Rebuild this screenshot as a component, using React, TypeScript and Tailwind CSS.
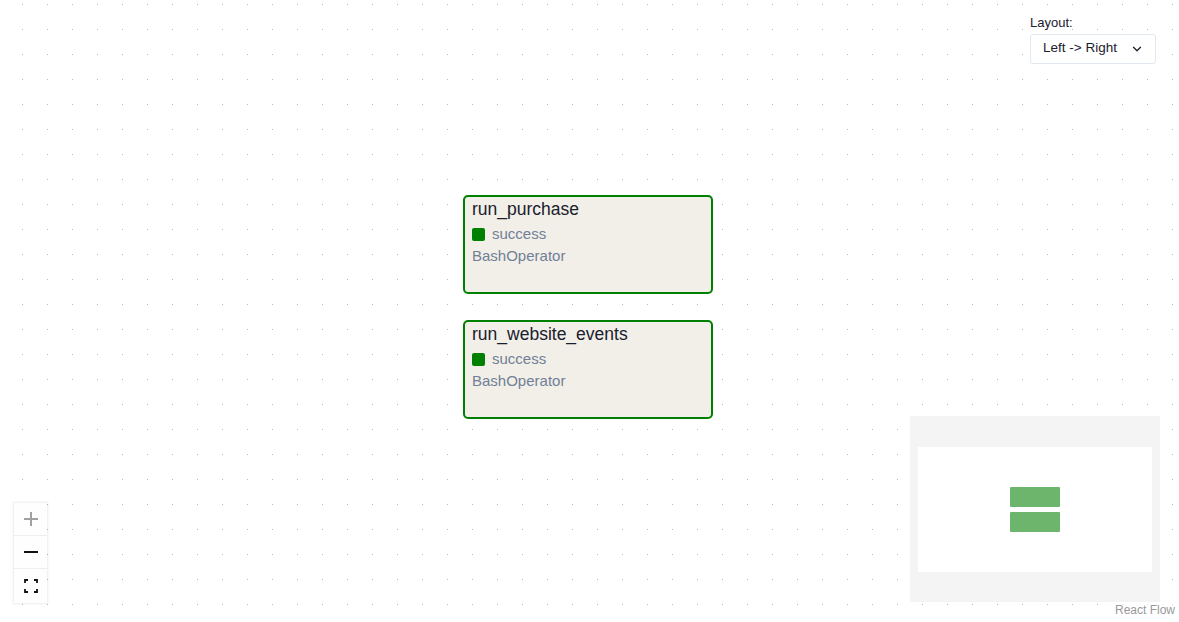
import { ChevronDown } from "lucide-react";

type TaskNode = { id: string; top: number; left: number; state: string; operator: string };

const nodes: TaskNode[] = [
  { id: "run_purchase", top: 195, left: 463, state: "success", operator: "BashOperator" },
  { id: "run_website_events", top: 320, left: 463, state: "success", operator: "BashOperator" },
];

export default function App() {
  return (
    <div className="relative h-[622px] w-full overflow-hidden bg-white bg-[radial-gradient(circle,#b8b8c0_0.7px,transparent_1px)] bg-[size:25px_25px] bg-[position:10px_-8px] font-['Liberation_Sans',Arial,sans-serif]">
      {/* layout picker */}
      <div className="absolute right-[23px] top-[14px] w-[126px]">
        <div className="mb-[3px] text-[13px] leading-[17px] text-[#1a202c]">Layout:</div>
        <div className="flex h-[30px] items-center justify-between rounded-[3px] border border-[#e2e8f0] bg-white pl-[12px] pr-[11px] text-[13.5px] text-[#1a202c]">
          <span className="-mt-[1px]">Left -&gt; Right</span>
          <ChevronDown className="h-[14px] w-[14px]" strokeWidth={2.2} />
        </div>
      </div>

      {nodes.map((n) => (
        <div
          key={n.id}
          className="absolute h-[99px] w-[250px] rounded-[5px] border-2 border-[#008000] bg-[#f2efe9] px-[7px] pt-[2px]"
          style={{ top: n.top, left: n.left }}
        >
          <div className="text-[17.5px] leading-[21px] text-[#1a202c]">{n.id}</div>
          <div className="mt-[4px] flex items-center gap-[7px] text-[15px] leading-[20px] text-[#718096]">
            <span className="h-[13px] w-[13px] rounded-[2px] bg-[#008000]" />
            {n.state}
          </div>
          <div className="mt-[2px] text-[15px] leading-[20px] text-[#718096]">{n.operator}</div>
        </div>
      ))}

      {/* zoom controls */}
      <div className="absolute left-[14px] top-[503px] flex w-[33px] flex-col shadow-[0_0_2px_1px_rgba(0,0,0,0.08)]">
        <button type="button" className="flex h-[33px] items-center justify-center border-b border-[#eee] bg-[#fefefe]">
          <svg className="h-[16px] w-[16px]" viewBox="0 0 16 16" fill="none" stroke="#a0a0a0" strokeWidth="2">
            <path d="M8 1v14M1 8h14" />
          </svg>
        </button>
        <button type="button" className="flex h-[33px] items-center justify-center border-b border-[#eee] bg-[#fefefe]">
          <svg className="h-[16px] w-[16px]" viewBox="0 0 16 16" fill="none" stroke="#111" strokeWidth="2">
            <path d="M1 8h14" />
          </svg>
        </button>
        <button type="button" className="flex h-[34px] items-center justify-center bg-[#fefefe]">
          <svg className="h-[14px] w-[14px]" viewBox="0 0 14 14" fill="none" stroke="#111" strokeWidth="1.8">
            <path d="M1 4V1h3M10 1h3v3M13 10v3h-3M4 13H1v-3" />
          </svg>
        </button>
      </div>

      {/* minimap */}
      <div className="absolute left-[910px] top-[416px] flex h-[186px] w-[250px] items-center justify-center bg-[#f4f4f4]">
        <div className="flex h-[125px] w-[234px] flex-col items-center justify-center gap-[5px] bg-white">
          <div className="h-[20px] w-[50px] rounded-[1px] bg-[#6db56d]" />
          <div className="h-[20px] w-[50px] rounded-[1px] bg-[#6db56d]" />
        </div>
      </div>

      <div className="absolute bottom-[4px] right-[2px] bg-white/50 px-[2px] text-[12px] leading-[16px] text-[#999]">React Flow</div>
    </div>
  );
}
